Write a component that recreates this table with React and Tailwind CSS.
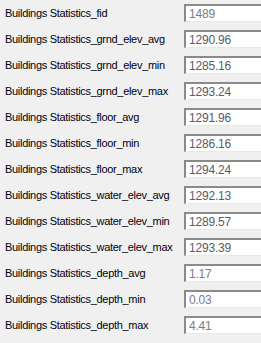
const rows = [
  ['Buildings Statistics_fid', '1489', false],
  ['Buildings Statistics_grnd_elev_avg', '1290.96', true],
  ['Buildings Statistics_grnd_elev_min', '1285.16', true],
  ['Buildings Statistics_grnd_elev_max', '1293.24', true],
  ['Buildings Statistics_floor_avg', '1291.96', true],
  ['Buildings Statistics_floor_min', '1286.16', true],
  ['Buildings Statistics_floor_max', '1294.24', true],
  ['Buildings Statistics_water_elev_avg', '1292.13', true],
  ['Buildings Statistics_water_elev_min', '1289.57', true],
  ['Buildings Statistics_water_elev_max', '1293.39', true],
  ['Buildings Statistics_depth_avg', '1.17', false],
  ['Buildings Statistics_depth_min', '0.03', false],
  ['Buildings Statistics_depth_max', '4.41', false],
]

export default function App() {
  return (
    <div className="w-[261px] h-[343px] overflow-hidden bg-[#f0f0f0] font-['Liberation_Sans',sans-serif]">
      {rows.map(([label, value, dark]) => (
        <div key={label} className="flex items-center h-[26px]">
          <div className="w-[184px] shrink-0 pl-[5px] text-[11px] tracking-[-0.3px] text-[#000010] whitespace-nowrap">
            {label}
          </div>
          <div className="w-[90px] shrink-0 h-[18px] bg-white border-t-2 border-l-2 border-t-[#8a8a8a] border-l-[#8a8a8a] border-b border-b-[#e8e8e8] flex items-center pl-[3px]">
            <span className={`text-[12px] leading-none tracking-[-0.2px] ${dark ? 'text-[#5a5a6a]' : 'text-[#7a7a8a]'}`}>
              {value}
            </span>
          </div>
        </div>
      ))}
    </div>
  )
}
